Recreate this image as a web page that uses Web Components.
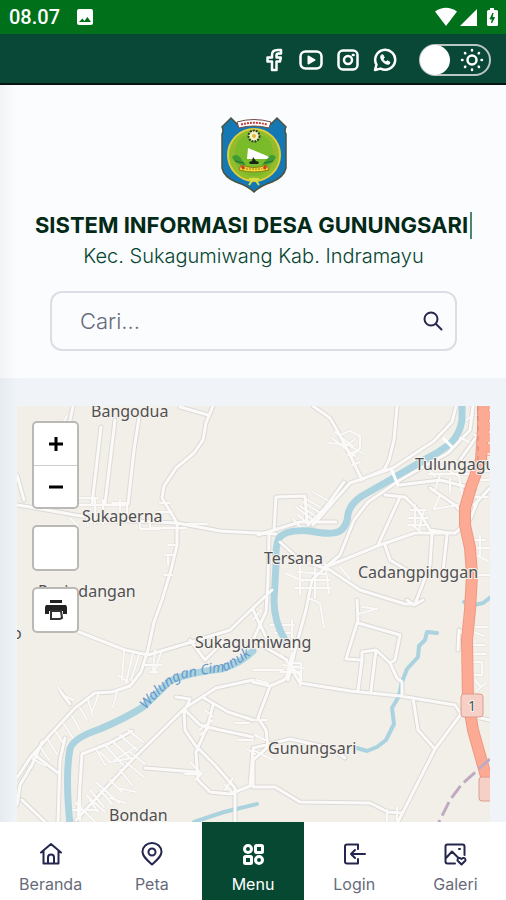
<!DOCTYPE html>
<html lang="id">
<head>
<meta charset="utf-8">
<meta name="viewport" content="width=device-width, initial-scale=1">
<title>Sistem Informasi Desa Gunungsari</title>
<style>
    body{
        margin: 0;
        font-family: Inter, "Liberation Sans", sans-serif;
        background-color: #f0f4f9;
    }
</style>
</head>
<body>
<village-app>
    <status-bar slot="top">08.07</status-bar>
    <top-bar slot="top"></top-bar>
    <site-header slot="top">
        <span slot="title">SISTEM INFORMASI DESA GUNUNGSARI</span>
        <span slot="subtitle">Kec. Sukagumiwang Kab. Indramayu</span>
    </site-header>
    <village-map></village-map>
    <bottom-nav slot="bottom">
        <nav-item icon="home">Beranda</nav-item>
        <nav-item icon="pin">Peta</nav-item>
        <nav-item icon="menu" active>Menu</nav-item>
        <nav-item icon="login">Login</nav-item>
        <nav-item icon="gallery">Galeri</nav-item>
    </bottom-nav>
</village-app>

<script>
class VillageApp extends HTMLElement{
    constructor(){
        super();
        this.attachShadow({ mode: 'open' });
        this.shadowRoot.innerHTML = `
            <slot name="top"></slot>
            <main><slot></slot></main>
            <slot name="bottom"></slot>
            <style>
                :host{
                    display: flex;
                    flex-direction: column;
                    height: 100vh;
                }

                main{
                    flex: 1;
                    min-height: 0;
                    display: flex;
                    padding: 28px 16px 0 17px;
                    background: linear-gradient(90deg, #e6ebf0, #f0f4f9 17px);
                }
            </style>
        `;
    }
}

class StatusBar extends HTMLElement{
    constructor(){
        super();
        this.attachShadow({ mode: 'open' });
        this.shadowRoot.innerHTML = `
            <span class="time"><slot></slot></span>
            <svg width="18" height="18" viewBox="0 0 18 18" aria-hidden="true">
                <path d="M3 1h12a2 2 0 0 1 2 2v12a2 2 0 0 1-2 2H3a2 2 0 0 1-2-2V3a2 2 0 0 1 2-2zM3 14h12l-3.600-5-3 4-2-2.400z" fill="#fff" fill-rule="evenodd"/>
            </svg>
            <svg class="right" width="66" height="22" viewBox="0 0 66 22" fill="#fff" aria-hidden="true">
                <path d="M1 5.500Q12-2 23 5.500L12 20z"/>
                <path d="M43 3v17H26z"/>
                <path d="M56 2h4v2h2.500q1.500 0 1.500 1.500v13q0 1.500-1.500 1.500h-8q-1.500 0-1.500-1.500v-13Q53 4 54.500 4H56z"/>
                <path d="M59 7l-3 6h2.500l-1 4 3-5.500h-2.500z" fill="#00701a" stroke="#00701a"/>
            </svg>
            <style>
                :host{
                    display: flex;
                    align-items: center;
                    height: 34px;
                    padding: 0 6px 0 9px;
                    background-color: #00701a;
                    color: #fff;
                }

                .time{
                    font: 500 20px/24px Roboto, sans-serif;
                    margin-right: 16px;
                }

                .right{
                    margin-left: auto;
                }
            </style>
        `;
    }
}

class TopBar extends HTMLElement{
    constructor(){
        super();
        this.attachShadow({ mode: 'open' });
        this.shadowRoot.innerHTML = `
            <nav>
                <a href="#facebook" aria-label="Facebook">
                    <svg viewBox="0 0 24 24"><path d="M14.500 13.500H18l.8-4h-4.300V7.500c0-1.200.5-2 2-2H19V2h-3.500C11.500 2 10 4.200 10 7v2.500H5.500v4H10V22h4.500z"/></svg>
                </a>
                <a href="#youtube" aria-label="YouTube">
                    <svg viewBox="0 0 24 24"><rect x="1.500" y="3.500" width="21" height="17" rx="5"/><path d="M9.500 8.500l6 3.500-6 3.500z" fill="#fff" stroke-width="2"/></svg>
                </a>
                <a href="#instagram" aria-label="Instagram">
                    <svg viewBox="0 0 24 24"><rect x="2.500" y="2.500" width="19" height="19" rx="4.500"/><circle cx="12" cy="12" r="4"/><path d="M16.800 7h.8"/></svg>
                </a>
                <a href="#whatsapp" aria-label="WhatsApp">
                    <svg viewBox="0 0 24 24"><path d="M2 22l1.500-5.300A10 10 0 1 1 7.500 20.600z"/><path d="M8 7.500c-.8 2 0 4.300 2 6.300s4.300 3 6.200 2.200l.8-1.800-2.700-1.500-1.300 1.300c-1.500-.6-2.500-1.700-3-3l1.300-1.300L10 7z" fill="#fff" stroke-width="1"/></svg>
                </a>
            </nav>
            <label>
                <input type="checkbox" aria-label="Mode gelap">
                <svg viewBox="0 0 24 24"><circle cx="12" cy="12" r="4.500"/><path d="M12 2v.5M12 21.500v.5M2 12h.5M21.500 12h.5M5 5l.3.3M18.700 18.700l.3.3M5 19l.3-.3M18.700 5.300l.3-.3"/></svg>
            </label>
            <style>
                :host{
                    display: flex;
                    align-items: center;
                    justify-content: flex-end;
                    gap: 22px;
                    height: 47px;
                    padding: 2px 15px 0 0;
                    background-color: #094736;
                    border-bottom: 2px solid #03150f;
                }

                nav{
                    display: flex;
                    gap: 13px;
                }

                a{
                    display: flex;
                }

                svg{
                    width: 24px;
                    height: 24px;
                    fill: none;
                    stroke: #fff;
                    stroke-width: 2.500;
                    stroke-linejoin: round;
                    stroke-linecap: round;
                    box-sizing: border-box;
                }

                label{
                    display: flex;
                    align-items: center;
                    justify-content: space-between;
                    box-sizing: border-box;
                    width: 72px;
                    height: 32px;
                    padding-right: 5px;
                    border: 2px solid #b9c6c1;
                    border-radius: 16px;
                }

                input{
                    appearance: none;
                    width: 30px;
                    height: 30px;
                    margin: 0 0 0 -1px;
                    border-radius: 50%;
                    background-color: #fff;
                }
            </style>
        `;
    }
}

class SiteHeader extends HTMLElement{
    constructor(){
        super();
        this.attachShadow({ mode: 'open' });
        this.shadowRoot.innerHTML = `
            <svg class="crest" width="68" height="78" viewBox="0 0 68 78" role="img" aria-label="Lambang Kabupaten Indramayu">
                <path d="M11 2L17 8Q34 1 51 8L57 2 66 11Q64 15 66 18V52Q64 61 52 66 40 70 34 76 28 70 16 66 4 61 2 52V18Q4 15 2 11z" fill="#1478b5" stroke="#4a5340" stroke-width="1.500"/>
                <circle cx="34" cy="39" r="26" fill="#8fbd2b" stroke="#e0cf3c" stroke-width="2"/>
                <circle cx="34" cy="39" r="21" fill="#7abb2c"/>
                <path d="M17 6Q34 1 51 6L49 12Q34 8 19 12z" fill="#fff" stroke="#6d4b45"/>
                <path d="M21 8.500Q34 5 47 8.500" fill="none" stroke="#c53b42" stroke-width="2" stroke-dasharray="2 1"/>
                <path d="M16 27Q11 43 19 55M52 27Q57 43 49 55" fill="none" stroke="#caa93a" stroke-width="1" stroke-dasharray="2 1"/>
                <circle cx="34" cy="20" r="5.500" fill="#f5f3c6" stroke="#27401e" stroke-width="2" stroke-dasharray="2 1"/>
                <circle cx="34" cy="20" r="2" fill="#e0b83c"/>
                <path d="M12 41Q17 36 22 44L26 49Q16 50 12 41zM56 41Q51 36 46 44L42 49Q52 50 56 41z" fill="#3f9b33"/>
                <path d="M15 45l9 2M53 45l-9 2" stroke="#23702c"/>
                <path d="M28 32L45 39 49 41 47 43H27z" fill="#fff"/>
                <path d="M33 41l3 4 3 1-1 2h-8l-1-2 3-1z" fill="#18231a"/>
                <path d="M21 49Q34 54 47 49L49 54Q34 58 19 54z" fill="#efd933" stroke="#927c1b"/>
                <path d="M26 53h16" stroke="#af7b24" stroke-dasharray="2 1"/>
                <path d="M22 50l2 3M46 50l-2 3" stroke="#d43a26" stroke-width="3"/>
                <path d="M34 62l-5 7M34 62l5 7M29 63h10" stroke="#d8dc47" stroke-width="2"/>
            </svg>
            <h1><slot name="title"></slot><i></i></h1>
            <p><slot name="subtitle"></slot></p>
            <form>
                <input type="text" placeholder="Cari..." aria-label="Cari">
                <button type="button" aria-label="Cari">
                    <svg width="20" height="20" viewBox="0 0 20 20" fill="none" stroke="#29264f" stroke-width="2" stroke-linecap="round"><circle cx="8" cy="8" r="6.500"/><path d="M13 13l5.500 5.500"/></svg>
                </button>
            </form>
            <style>
                :host{
                    display: flex;
                    flex-direction: column;
                    align-items: center;
                    padding: 31px 49px 27px 50px;
                    background: linear-gradient(90deg, #f1f3f5, #fafcfe 17px);
                    color: #07452f;
                }

                h1{
                    display: flex;
                    align-items: center;
                    gap: 2px;
                    margin: 16px 0 0;
                    font-size: 22px;
                    line-height: 30px;
                    font-weight: 700;
                    white-space: nowrap;
                    color: #032a17;
                }

                i{
                    width: 2px;
                    height: 27px;
                    background-color: #4d8670;
                }

                p{
                    margin: 4px 0 0;
                    font-size: 20px;
                    line-height: 24px;
                    font-weight: 300;
                }

                form{
                    display: flex;
                    align-items: center;
                    align-self: stretch;
                    box-sizing: border-box;
                    height: 60px;
                    margin-top: 23px;
                    border: 2px solid #dbdfe5;
                    border-radius: 12px;
                    background-color: #fbfcfe;
                }

                input{
                    flex: 1;
                    min-width: 0;
                    padding: 0 28px;
                    border: 0;
                    outline: 0;
                    background: none;
                    font: 300 22px/32px Inter, sans-serif;
                }

                input::placeholder{
                    color: #656a7c;
                    opacity: 1;
                }

                button{
                    display: flex;
                    padding: 0 12px;
                    border: 0;
                    background: none;
                }
            </style>
        `;
    }
}

// streets share one geometry, drawn twice: grey casing first, white fill on top
const ROADS = `
    M213 406L206 423 203 440 194 453 176 468 164 486 162 498 168 508 177 523 177 545 171 570 162 600 154 622 148 650 141 672 130 686 112 692 95 693 75 708 50 735 30 758 17 778
    M17 505L30 507 75 515 110 520 177 523 220 531 276 534
    M101 427L92 504 M115 420L105 504 M139 418L134 450 128 504 M73 406L68 430
    M180 407L208 415 M17 475L24 500
    M79 632L125 650 148 655 195 641 230 630 253 608 272 590
    M313 406L330 418 338 432 350 455 362 480
    M397 406L394 440 389 460 384 470 360 480
    M456 406L452 422 434 441 393 468 350 483 335 500 313 525 M344 482L325 508 308 525
    M473 406L470 430 448 453 400 480 368 502 354 520 340 555 326 567
    M258 535L274 530 300 522 336 522 M274 530L276 497 305 496 307 522
    M253 640L266 612 268 580 269 535
    M326 567L380 545 415 533 455 533 470 520 478 500
    M385 495L405 497 418 510 430 530 450 533 M400 497L378 545
    M280 542L300 560 330 570 360 590 405 604 415 604 430 565 432 535
    M385 545L390 560 410 572 M447 535L442 580
    M326 567L312 580 306 610 295 650 288 680
    M400 485L440 480 475 489 M430 488L455 505 465 515
    M253 680L216 688 185 708 130 762 76 820
    M17 805L20 785 32 765 42 742 M22 800L45 822
    M184 710L185 730 195 745 215 765 235 788 235 822
    M176 697L190 699 185 710 200 725 220 730 253 737
    M204 698L228 712 253 720 M213 705L208 725 196 752 198 780 210 792 230 794 250 786 253 750
    M145 768L195 772 M132 731L110 743 82 754 80 785 78 815
    M65 738L60 760 58 822 M35 755L58 773
    M357 600L358 620 346 659 362 660 358 691
    M358 623L400 635 395 660 390 663 376 650 362 652 362 660
    M376 650L371 691 M390 663L397 678 402 682 402 696
    M253 682L270 686 284 680 292 670 300 683 350 691 400 696 455 705 461 714 490 720
    M461 714L435 749 398 822 M413 698L418 730 435 749
    M253 787L275 787 300 802 370 803 388 812 402 813
    M270 686L258 718 266 730 268 747 253 760 253 787
    M253 748L290 739 330 748 345 758
    M190 640L205 660 225 640 M61 692L70 704
    M253 610L270 645 M287 660L253 640 M407 600L414 605 423 600
    M486 423L470 446 460 460 M490 488L474 505 M470 640L459 630 458 650
`;

const LANES = `
    M75 505h50M78 498h20M85 510l3 16M95 498v26M103 500v24M112 503h15v15M120 500v20M70 518l8 8M90 522h34M140 520v9h20M150 515v13h36M182 524h25M160 503h10M157 512h15
    M168 545h7M165 555h9M168 565v-8M164 575h8M62 426l5-10
    M335 432l18 15M332 438l23 18M328 443l24 2M340 435l10-4 10 5v12l-8 8M345 447l10-8M348 455l10-5M352 465l8-3M350 446l14 8
    M314 515l-14-9M320 507l-14-8M327 500l-14-8M308 524l-10-9M302 529l-9-10M296 507l18 14M303 502l17 11
    M300 580h30M295 588h36M300 565v30M315 568v30M325 563l4 30M298 572l28 2M285 573l18 8M340 567l10 12M308 598l12 5 4 25
    M415 505v22M410 510h16M408 518h20M412 525l10 8M424 510l-5 20M408 525h20
    M440 475l-5 15M450 478v15M458 470l4 24M428 474h43M435 463l25 14M425 466l10 10M440 495l-6 14 24-4
    M476 415h12M474 435h16M482 445h8M475 471h14M477 480h12M474 497h14M465 490v25M462 423l11-8M455 435l14 7
    M124 650l-2 30M133 653l-7 30M139 655l-8 25M118 675l10 7M155 650l-2 20M162 650l-8 23M145 665h17M150 672h8
    M88 700l5 16M80 708l7 12M72 716l8 14M64 724l9 14M56 732l8 12M48 740l9 14M41 748l8 12M98 695l-5 15M58 687l6 9 10 4M30 757l15 9M117 692l-4 15
    M105 745l18 20M112 741l18 17M120 735l17 15M128 730l15 12M100 752l10 10 22-4M97 751l8 14M115 760l21-13
    M120 770l12 15M110 780l12 12M100 790l12 14M90 800l8 12M127 763l17 14M97 783l22 20M87 796l18 16M76 803l19 19M130 752l15 12M118 788l18 4M110 798l16 5M80 795v25M90 790l14 17M72 810h26
    M205 710l8 7M213 720l-14 10M200 735l8-6M190 762l12 12M185 774h15M195 780l6-6M225 790l8-12M235 795l-10-10M253 740h-15M247 749l8 5M235 723h14
    M283 665l20 3M281 655l20 22M292 653l-6 25M253 670h30M256 680l12 3M280 672h20v14M288 663h13v18
    M362 607l15 2M358 614l18-5M474 632l10 4M472 645h13M474 662h8v13h-10M475 680l5 6M475 627h12M472 654h14M476 691l10-8M475 710h8
    M387 810v12M397 807v15M255 720h12M255 735l10 5M253 750l20 10M270 625h24M275 633h15M292 620v30M253 620l8-10
    M470 540h15M475 548h15M476 555l12 6M476 575h15M480 535v20
`;

class VillageMap extends HTMLElement{
    constructor(){
        super();
        this.attachShadow({ mode: 'open' });
        this.shadowRoot.innerHTML = `
            <svg class="tiles" viewBox="17 406 473 416" preserveAspectRatio="xMinYMin slice" aria-label="Peta Desa Gunungsari">
                <rect x="17" y="406" width="473" height="416" fill="#f2efe9"/>
                <g fill="none" stroke-linejoin="round" stroke-linecap="round">
                    <path d="${LANES}" stroke="#e3e0dd" stroke-width="3"/>
                    <path d="${ROADS}" stroke="#dcdad7" stroke-width="5"/>
                    <path d="${LANES}" stroke="#fbfaf9" stroke-width="2"/>
                    <path d="M462 400V420Q460 434 450 444 438 453 424 460L390 480 362 496Q350 504 348 514 347 528 338 532 330 535 310 531 286 529 279 538 275 546 276 565L274 600Q274 622 285 640M253 651Q241 663 222 669 190 672 170 681 157 694 143 707 126 718 100 729 73 738 70 749 65 775 70 825" stroke="#aad3df" stroke-width="7"/>
                    <path d="M437 633l-10-1-2 8-6 6-1 11-11 12-5 13-3 14-7 12 2 16-8 16-9 7-10 4-10-3M194 822l30-10 33-8M464 602l10 3 9-2 8-6" stroke="#aad3df" stroke-width="4"/>
                    <path d="${ROADS}" stroke="#fbfaf9" stroke-width="3"/>
                    <path d="M392 471l6 14M444 439l8 8" stroke="#fff" stroke-width="3"/>
                    <path d="M483 400L483 430 481 460 471 487 465 508 465 525 470 548 472 575 470 610 467 640 468 700 473 730 480 755 490 790" stroke="#ee9884" stroke-width="12"/>
                    <path d="M483 400L483 430 481 460 471 487 465 508 465 525 470 548 472 575 470 610 467 640 468 700 473 730 480 755 490 790" stroke="#fcaa93" stroke-width="10"/>
                    <path d="M489 400v56" stroke="#fcaa93" stroke-width="5" stroke-dasharray="9 2" stroke-linecap="butt"/>
                    <path d="M478 406v54" stroke="#dd8472" stroke-width="1" stroke-dasharray="5 5" stroke-linecap="butt"/>
                    <path d="M490 759L462 784 450 800 438 824" stroke="#bfaabf" stroke-width="3" stroke-dasharray="15 5" stroke-linecap="butt"/>
                </g>
                <g fill="#f6cfc6" stroke="#dd9c8e">
                    <rect x="461" y="694" width="22" height="23" rx="3"/>
                    <rect x="479" y="777" width="22" height="24" rx="3"/>
                </g>
                <path id="river" d="M146 710Q163 688 181 679 204 674 226 671 245 661 262 646" fill="none"/>
                <g class="names">
                    <text x="91" y="417">Bangodua</text>
                    <text x="82" y="522">Sukaperna</text>
                    <text x="38" y="597">Pasindangan</text>
                    <text x="264" y="564">Tersana</text>
                    <text x="358" y="578">Cadangpinggan</text>
                    <text x="415" y="470">Tulungagung</text>
                    <text x="195" y="648">Sukagumiwang</text>
                    <text x="268" y="754">Gunungsari</text>
                    <text x="109" y="821">Bondan</text>
                    <text x="12" y="639">o</text>
                    <text x="468" y="711" font-size="14">1</text>
                </g>
                <text class="water"><textPath href="#river">Walungan Cimanuk</textPath></text>
            </svg>
            <div class="controls">
                <div class="group">
                    <button type="button" aria-label="Perbesar"><svg viewBox="0 0 16 16"><path d="M8 1v14M1 8h14"/></svg></button>
                    <button type="button" aria-label="Perkecil"><svg viewBox="0 0 16 16"><path d="M1 8h14"/></svg></button>
                </div>
                <div class="group"><button type="button" aria-label="Layar penuh"></button></div>
                <div class="group">
                    <button type="button" aria-label="Cetak">
                        <svg class="print" viewBox="0 0 24 22"><path d="M6 1h12v3H6zM2 6h20l1 2v7h-4v-3H5v3H1V8z" fill="#222"/><path d="M7 12h10l1 7-2 1H7z" fill="#fff" stroke="#333" stroke-width="2"/></svg>
                    </button>
                </div>
            </div>
            <style>
                :host{
                    position: relative;
                    display: block;
                    flex: 1;
                    overflow: hidden;
                }

                .tiles{
                    display: block;
                    width: 100%;
                    height: 100%;
                }

                .names{
                    font: 16px "Noto Sans", sans-serif;
                    fill: #505050;
                    stroke: #f6f3ef;
                    stroke-width: 2;
                    paint-order: stroke;
                }

                .water{
                    font: italic 14px "Noto Sans", sans-serif;
                    fill: #6699cc;
                }

                .controls{
                    position: absolute;
                    left: 15px;
                    top: 15px;
                    display: flex;
                    flex-direction: column;
                    gap: 16px;
                }

                .group{
                    width: 43px;
                    border: 2px solid #bbb9b5;
                    border-radius: 5px;
                    background-color: #fff;
                }

                button{
                    display: flex;
                    align-items: center;
                    justify-content: center;
                    width: 100%;
                    height: 42px;
                    padding: 0;
                    border: 0;
                    background: none;
                }

                button + button{
                    border-top: 1px solid #ccc;
                }

                button svg{
                    width: 16px;
                    height: 16px;
                    stroke: #000;
                    stroke-width: 3;
                }

                button .print{
                    width: 24px;
                    height: 22px;
                    stroke: none;
                    stroke-width: 1;
                }
            </style>
        `;
    }
}

class BottomNav extends HTMLElement{
    constructor(){
        super();
        this.attachShadow({ mode: 'open' });
        this.shadowRoot.innerHTML = `
            <nav><slot></slot></nav>
            <style>
                :host{
                    display: block;
                    background-color: #fff;
                }

                nav{
                    display: flex;
                }
            </style>
        `;
    }
}

const ICONS = {
    home: '<path d="M2 10.500L12 2l10 8.500M4.500 9v12.500h15V9M9 21v-5.500a3 3 0 0 1 6 0V21"/>',
    pin: '<path d="M12 22.500C7 18 2.500 14.500 2.500 9.800a9.500 8.800 0 0 1 19 0C21.500 14.500 17 18 12 22.500z"/><circle cx="12" cy="10" r="3.500"/>',
    menu: '<g stroke-width="3"><circle cx="7" cy="7" r="3.500"/><rect x="14.500" y="3.500" width="7" height="7" rx="1"/><rect x="3.500" y="14.500" width="7" height="7" rx="1"/><circle cx="18" cy="18" r="3.500"/></g>',
    login: '<path d="M16 7V2.500H5Q3 2.500 3 4.500v15q0 2 2 2h11V17M23 12H9M13 8l-4 4 4 4"/>',
    gallery: '<path d="M12 21.500H4.500q-2 0-2-2v-15q0-2 2-2h15q2 0 2 2V13M3 16l6-6.500 6 6M16 7h1"/><path d="M18.500 22.500l-4-4q0-3 2.500-2.500l1.500 1 1.500-1q2.500-.5 2.500 2.500z"/>'
};

class NavItem extends HTMLElement{
    constructor(){
        super();
        this.attachShadow({ mode: 'open' });
    }

    connectedCallback(){
        this.render();
    }

    render(){
        this.shadowRoot.innerHTML = `
            <a href="#${this.getAttribute('icon')}">
                <svg viewBox="0 0 24 24" aria-hidden="true">${ICONS[this.getAttribute('icon')]}</svg>
                <slot></slot>
            </a>
            <style>
                :host{
                    flex: 1;
                    display: block;
                    color: #666b7a;
                    --icon: #24264d;
                }

                :host([active]){
                    background-color: #064832;
                    color: #fff;
                    --icon: #fff;
                }

                a{
                    display: flex;
                    flex-direction: column;
                    align-items: center;
                    gap: 8px;
                    padding: 20px 0 6px;
                    color: inherit;
                    font-size: 16px;
                    line-height: 20px;
                    text-decoration: none;
                }

                svg{
                    width: 24px;
                    height: 24px;
                    fill: none;
                    stroke: var(--icon);
                    stroke-width: 2;
                    stroke-linejoin: round;
                    stroke-linecap: round;
                }
            </style>
        `;
    }
}

customElements.define('village-app', VillageApp);
customElements.define('status-bar', StatusBar);
customElements.define('top-bar', TopBar);
customElements.define('site-header', SiteHeader);
customElements.define('village-map', VillageMap);
customElements.define('bottom-nav', BottomNav);
customElements.define('nav-item', NavItem);
</script>
</body>
</html>
